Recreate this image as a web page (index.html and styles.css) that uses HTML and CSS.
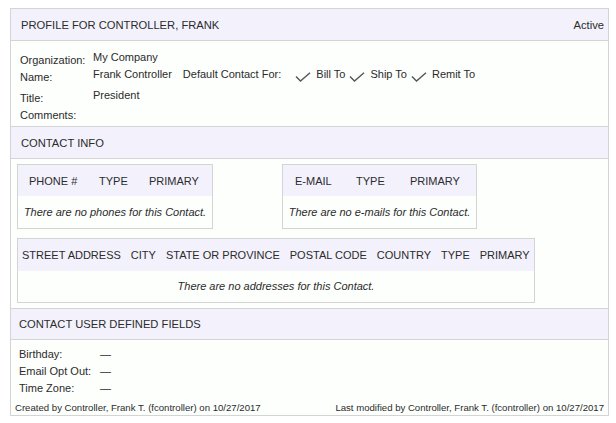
FILE: index.html
```html
<!DOCTYPE html>
<html>
<head>
<meta charset="utf-8">
<link rel="stylesheet" href="styles.css">
</head>
<body>
<div class="panel">
  <div class="hdr"><span>PROFILE FOR CONTROLLER, FRANK</span><span class="status">Active</span></div>
  <div class="profile">
    <div class="prow r1"><div class="lbl">Organization:</div><div class="val">My Company</div></div>
    <div class="prow r2"><div class="lbl">Name:</div><div class="val">Frank Controller</div>
      <div class="dcf">
        <span class="dcf-lbl">Default Contact For:</span>
        <svg class="chk" viewBox="0 0 16 10" width="16" height="10"><path d="M1 4.5 L5.5 9 L15 0.8" fill="none" stroke="#555" stroke-width="1.4"/></svg>
        <span>Bill To</span>
        <svg class="chk" viewBox="0 0 16 10" width="16" height="10"><path d="M1 4.5 L5.5 9 L15 0.8" fill="none" stroke="#555" stroke-width="1.4"/></svg>
        <span>Ship To</span>
        <svg class="chk" viewBox="0 0 16 10" width="16" height="10"><path d="M1 4.5 L5.5 9 L15 0.8" fill="none" stroke="#555" stroke-width="1.4"/></svg>
        <span>Remit To</span>
      </div>
    </div>
    <div class="prow r3"><div class="lbl">Title:</div><div class="val">President</div></div>
    <div class="prow r4"><div class="lbl">Comments:</div><div class="val"></div></div>
  </div>
  <div class="hdr"><span>CONTACT INFO</span></div>
  <div class="contact">
    <div class="pair">
      <div class="tbl phones">
        <div class="thead"><span class="c1">PHONE #</span><span class="c2">TYPE</span><span class="c3">PRIMARY</span></div>
        <div class="tbody">There are no phones for this Contact.</div>
      </div>
      <div class="tbl emails">
        <div class="thead"><span class="e1">E-MAIL</span><span class="e2">TYPE</span><span class="e3">PRIMARY</span></div>
        <div class="tbody">There are no e-mails for this Contact.</div>
      </div>
    </div>
    <div class="tbl addr">
      <div class="thead"><span>STREET ADDRESS</span><span>CITY</span><span>STATE OR PROVINCE</span><span>POSTAL CODE</span><span>COUNTRY</span><span>TYPE</span><span>PRIMARY</span></div>
      <div class="tbody">There are no addresses for this Contact.</div>
    </div>
  </div>
  <div class="hdr hdr3"><span>CONTACT USER DEFINED FIELDS</span></div>
  <div class="udf">
    <div class="frow"><span class="flbl">Birthday:</span><span>—</span></div>
    <div class="frow"><span class="flbl">Email Opt Out:</span><span>—</span></div>
    <div class="frow"><span class="flbl">Time Zone:</span><span>—</span></div>
    <div class="footer"><span>Created by Controller, Frank T. (fcontroller) on 10/27/2017</span><span>Last modified by Controller, Frank T. (fcontroller) on 10/27/2017</span></div>
  </div>
</div>
</body>
</html>
```
FILE: styles.css
```css
html, body {
  margin: 0;
  padding: 0;
  background: #fff;
}
body {
  font-family: "Liberation Sans", Arial, sans-serif;
  font-size: 11px;
  color: #2b2b2b;
  white-space: nowrap;
}
.panel {
  box-sizing: border-box;
  width: 599px;
  margin: 8px 0 0 10px;
  border: 1px solid #d4d4d4;
  background: #fdfffd;
}
.hdr {
  display: flex;
  justify-content: space-between;
  align-items: center;
  height: 31px;
  padding: 0 4px 0 10px;
  background: #f3f2fc;
  border-bottom: 1px solid #d4d4d4;
  line-height: 14px;
  font-size: 11.2px;
}
.hdr3 {
  height: 30px;
  padding-left: 8px;
}
.profile {
  padding: 9px 0 4px 9px;
  border-bottom: 1px solid #d4d4d4;
}
.prow {
  display: flex;
  align-items: flex-start;
  line-height: 14px;
  height: 17px;
}
.prow.r2 { height: 21px; }
.lbl {
  width: 73px;
  padding-top: 3px;
}
.dcf {
  display: flex;
  align-items: flex-start;
  margin-left: 11px;
}
.dcf-lbl { margin-right: 10px; }
.chk {
  margin: 5px 5px 0 0;
}
.dcf span + .chk { margin-left: 4px; }
.contact {
  padding: 5px 0 5px 6px;
  border-bottom: 1px solid #d4d4d4;
}
.pair {
  display: flex;
  align-items: flex-start;
  margin-bottom: 9px;
}
.tbl {
  box-sizing: border-box;
  border: 1px solid #d4d4d4;
}
.thead {
  display: flex;
  align-items: center;
  height: 31px;
  background: #f3f2fc;
  line-height: 14px;
}
.tbody {
  height: 32px;
  line-height: 32px;
  text-align: center;
  font-style: italic;
}
.phones { width: 196px; }
.emails { width: 195px; margin-left: 69px; }
.c1 { padding-left: 11px; width: 59px; }
.c2 { padding-left: 11px; width: 39px; }
.c3 { padding-left: 11px; }
.e1 { padding-left: 12px; width: 49px; }
.e2 { padding-left: 12px; width: 42px; }
.e3 { padding-left: 12px; }
.addr { width: 518px; }
.addr .thead { height: 32px; gap: 10px; padding-left: 4px; }
.addr .tbody { height: 31px; line-height: 31px; }
.udf {
  padding: 6px 4px 0 4px;
}
.frow {
  display: flex;
  line-height: 17px;
  padding-left: 4px;
}
.flbl { width: 81px; }
.footer {
  display: flex;
  justify-content: space-between;
  font-size: 9.6px;
  line-height: 13px;
  margin-top: 4px;
  padding-bottom: 1px;
}
```
